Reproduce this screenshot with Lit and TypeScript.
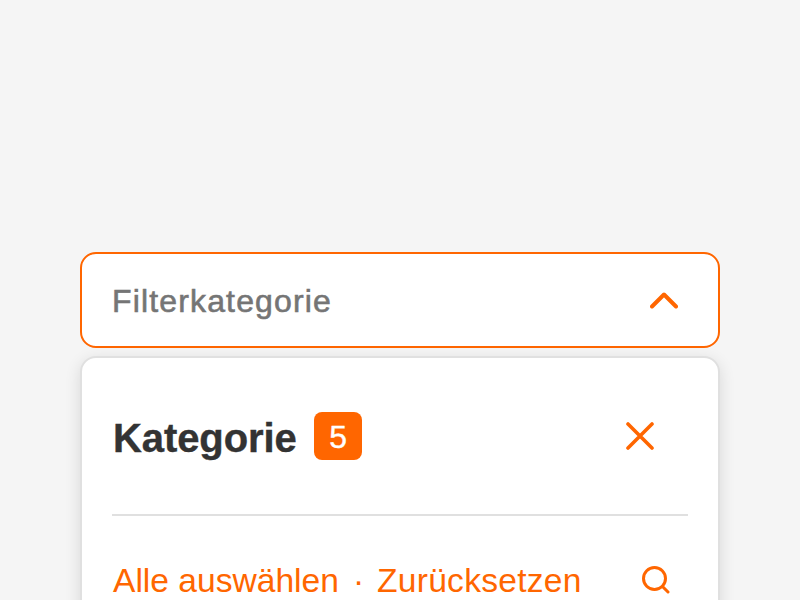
import { LitElement, html, css } from "lit";
import { customElement } from "lit/decorators.js";

@customElement("app-root")
export class AppRoot extends LitElement {
  static styles = css`
    :host {
      display: block;
      height: 600px;
      overflow: hidden;
      background: #f5f5f5;
      font-family: "Liberation Sans", Arial, sans-serif;
    }
    .wrap {
      box-sizing: border-box;
      padding: 252px 80px 0;
      display: flex;
      flex-direction: column;
      gap: 8px;
    }
    .trigger {
      box-sizing: border-box;
      height: 96px;
      border: 2px solid #ff6600;
      border-radius: 16px;
      background: #fff;
      display: flex;
      align-items: center;
      justify-content: space-between;
      padding: 0 40px 0 30px;
    }
    .placeholder {
      font-size: 32px;
      color: #757575;
      letter-spacing: 1.15px;
      padding-top: 2px;
      -webkit-text-stroke: 0.6px #757575;
    }
    .chevron { width: 28px; height: 28px; display: block; }
    .panel {
      box-sizing: border-box;
      height: 320px;
      border: 2px solid #e0e0e0;
      border-radius: 16px;
      background: #fff;
      padding: 0 30px;
      box-shadow: 0 4px 16px rgba(0, 0, 0, 0.12);
    }
    .head {
      box-sizing: border-box;
      height: 158px;
      border-bottom: 2px solid #e0e0e0;
      display: flex;
      align-items: center;
      justify-content: space-between;
      padding: 0 34px 0 1px;
    }
    .title { display: flex; align-items: center; gap: 17px; }
    h2 {
      margin: 0;
      padding-top: 4px;
      font-size: 40px;
      font-weight: 700;
      color: #333;
      letter-spacing: -0.1px;
      -webkit-text-stroke: 0.4px #333;
    }
    .badge {
      box-sizing: border-box;
      width: 48px;
      height: 48px;
      padding: 2px 0 0 1px;
      border-radius: 8px;
      background: #ff6600;
      color: #fff;
      font-size: 32px;
      -webkit-text-stroke: 0.4px #fff;
      display: flex;
      align-items: center;
      justify-content: center;
    }
    .close { width: 28px; height: 28px; display: block; }
    .actions {
      display: flex;
      align-items: center;
      justify-content: space-between;
      height: 130px;
      color: #ff6600;
      font-size: 33.6px;
    }
    .links { display: flex; gap: 14px; padding-left: 1px; }
    .reset { letter-spacing: 0.25px; margin-left: -1px; }
    .search { width: 28px; height: 28px; display: block; margin: 0 18px 2px 0; }
    .search, .search * { stroke-width: 3; }
    svg { fill: none; stroke: #ff6600; stroke-width: 3.6; stroke-linecap: round; stroke-linejoin: round; }
    .chevron path { stroke-width: 4; }
  `;

  render() {
    return html`
      <div class="wrap">
        <div class="trigger">
          <span class="placeholder">Filterkategorie</span>
          <svg class="chevron" viewBox="0 0 28 28"><path d="M2 20.5 L14 8.5 L26 20.5" /></svg>
        </div>
        <div class="panel">
          <div class="head">
            <div class="title"><h2>Kategorie</h2><span class="badge">5</span></div>
            <svg class="close" viewBox="0 0 28 28"><path d="M2 2 L26 26 M26 2 L2 26" /></svg>
          </div>
          <div class="actions">
            <div class="links"><span>Alle auswählen</span><span>·</span><span class="reset">Zurücksetzen</span></div>
            <svg class="search" viewBox="0 0 28 28"><circle cx="12.5" cy="12.5" r="11" /><path d="M20.5 20.5 L26 26" /></svg>
          </div>
        </div>
      </div>
    `;
  }
}
